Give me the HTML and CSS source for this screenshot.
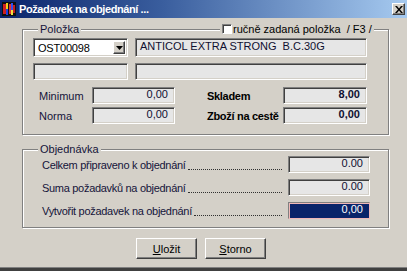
FILE: index.html
```html
<!DOCTYPE html>
<html lang="cs">
<head>
<meta charset="utf-8">
<title>Požadavek na objednání</title>
<link rel="stylesheet" href="styles.css">
</head>
<body>
<div class="window">
  <div class="titlebar">
    <svg class="app-icon" width="14" height="14" viewBox="0 0 14 14">
      <rect x="0" y="0" width="14" height="14" fill="#101010"/>
      <rect x="1" y="2" width="3" height="10" fill="#d02020"/>
      <rect x="4" y="1" width="2" height="6" fill="#f0d020"/>
      <rect x="4" y="7" width="2" height="6" fill="#2040e0"/>
      <rect x="7" y="2" width="2" height="10" fill="#e03030"/>
      <rect x="9" y="1" width="2" height="7" fill="#3050f0"/>
      <rect x="9" y="8" width="2" height="5" fill="#f0e040"/>
      <rect x="11" y="3" width="2" height="8" fill="#c02020"/>
    </svg>
    <span class="title">Požadavek na objednání ...</span>
    <span class="close">
      <svg width="8" height="7" viewBox="0 0 8 7"><path d="M0 0h2l2 2.5L6 0h2L5 3.5 8 7H6L4 4.5 2 7H0l3-3.5z" fill="#000"/></svg>
    </span>
  </div>
  <div class="content">
    <div class="group g1">
      <span class="legend legend-main">Položka</span>
      <span class="legend legend-check"><span class="check"></span>ručně zadaná položka&nbsp; / F3 /</span>
      <div class="ident">
        <div class="combo">
          <span class="combo-text">OST00098</span>
          <span class="combo-btn"><svg width="7" height="4" viewBox="0 0 7 4"><path d="M0 0h7L3.5 4z" fill="#000"/></svg></span>
        </div>
        <div class="field">ANTICOL EXTRA STRONG&nbsp; B.C.30G</div>
        <div class="field"></div>
        <div class="field"></div>
      </div>
      <div class="stats">
        <span class="lbl">Minimum</span>
        <div class="field num">0,00</div>
        <span class="lbl lbl-strong">Skladem</span>
        <div class="field num strong">8,00</div>
        <span class="lbl">Norma</span>
        <div class="field num">0,00</div>
        <span class="lbl lbl-strong">Zboží na cestě</span>
        <div class="field num strong">0,00</div>
      </div>
    </div>
    <div class="group g2">
      <span class="legend legend-main">Objednávka</span>
      <div class="orow">
        <span class="olbl">Celkem připraveno k objednání</span><span class="dots"></span>
        <div class="field num ofield">0.00</div>
      </div>
      <div class="orow">
        <span class="olbl">Suma požadavků na objednání</span><span class="dots"></span>
        <div class="field num ofield">0.00</div>
      </div>
      <div class="orow">
        <span class="olbl">Vytvořit požadavek na objednání</span><span class="dots"></span>
        <div class="field num ofield selected">0,00</div>
      </div>
    </div>
    <div class="buttons">
      <button class="btn" type="button"><u>U</u>ložit</button>
      <button class="btn" type="button"><u>S</u>torno</button>
    </div>
  </div>
  <div class="frame-bottom"></div>
</div>
</body>
</html>
```
FILE: styles.css
```css
html, body {
  margin: 0;
  padding: 0;
}
body {
  width: 407px;
  height: 271px;
  overflow: hidden;
  background: #d4d0c8;
  font-family: "Liberation Sans", Arial, sans-serif;
  font-size: 11px;
  color: #000;
}
.window {
  width: 407px;
  height: 271px;
  display: flex;
  flex-direction: column;
  background: #d4d0c8;
}
.titlebar {
  height: 18px;
  flex: none;
  display: flex;
  align-items: center;
  background: linear-gradient(to right, #0a246a 0%, #3a5e9e 40%, #a6caf0 100%);
  padding-left: 2px;
  box-sizing: border-box;
}
.app-icon {
  flex: none;
  display: block;
}
.title {
  margin-left: 3px;
  color: #fff;
  font-weight: bold;
  font-size: 11px;
  letter-spacing: -0.4px;
  white-space: nowrap;
}
.close {
  margin-left: auto;
  margin-right: 2px;
  width: 13px;
  height: 12px;
  box-sizing: border-box;
  background: #d4d0c8;
  border: 1px solid;
  border-color: #fff #404040 #404040 #fff;
  box-shadow: inset -1px -1px #808080;
  display: flex;
  align-items: center;
  justify-content: center;
}
.close svg { display: block; }
.content {
  padding: 11px 0 0 22px;
  display: flex;
  flex-direction: column;
}
.group {
  position: relative;
  width: 367px;
  box-sizing: border-box;
  border: 1px solid #808080;
  box-shadow: inset 1px 1px #fff, 1px 1px #fff;
}
.g1 {
  height: 106px;
  padding: 8px 0 0 10px;
}
.g2 {
  height: 79px;
  margin-top: 14px;
  padding: 6px 18px 0 19px;
  display: flex;
  flex-direction: column;
  gap: 6px;
}
.legend {
  position: absolute;
  top: -8px;
  background: #d4d0c8;
  padding: 0 2px;
  line-height: 14px;
  color: #14143a;
  white-space: nowrap;
}
.legend-main { left: 15px; }
.legend-check {
  left: 197px;
  display: flex;
  align-items: center;
  gap: 1px;
  color: #000;
}
.check {
  width: 10px;
  height: 10px;
  box-sizing: border-box;
  background: #fff;
  border: 1px solid;
  border-color: #808080 #fff #fff #808080;
  box-shadow: inset 1px 1px #404040;
}
.field {
  box-sizing: border-box;
  background: #e6e6e6;
  border: 1px solid;
  border-color: #808080 #fff #fff #808080;
  box-shadow: inset 1px 1px #404040, inset -1px -1px #d4d0c8;
  padding: 0 4px;
  line-height: 13px;
  white-space: nowrap;
  overflow: hidden;
  color: #101030;
}
.num {
  text-align: right;
  padding-right: 6px;
}
.strong { font-weight: bold; }
.ident {
  display: grid;
  grid-template-columns: 95px 232px;
  grid-template-rows: 19px 17px;
  column-gap: 7px;
  row-gap: 6px;
}
.ident .field {
  line-height: 15px;
  padding-left: 4px;
}
.combo {
  box-sizing: border-box;
  background: #fff;
  border: 1px solid;
  border-color: #808080 #fff #fff #808080;
  box-shadow: inset 1px 1px #404040, inset -1px -1px #d4d0c8;
  padding: 2px;
  display: flex;
  align-items: stretch;
}
.combo-text {
  flex: 1;
  padding-left: 2px;
  line-height: 15px;
  letter-spacing: -0.2px;
}
.combo-btn {
  width: 12px;
  box-sizing: border-box;
  background: #d4d0c8;
  border: 1px solid;
  border-color: #fff #404040 #404040 #fff;
  box-shadow: inset -1px -1px #808080;
  display: flex;
  align-items: center;
  justify-content: center;
}
.combo-btn svg { display: block; }
.stats {
  margin-top: 7px;
  display: grid;
  grid-template-columns: 59px 83px 108px 84px;
  grid-template-rows: 17px 17px;
  row-gap: 3px;
  align-items: center;
}
.stats .field { height: 17px; }
.lbl {
  padding-left: 6px;
  color: #14143a;
  white-space: nowrap;
}
.lbl-strong {
  padding-left: 32px;
  font-weight: bold;
  letter-spacing: -0.3px;
  color: #000;
}
.orow {
  height: 17px;
  display: flex;
  align-items: center;
}
.olbl {
  color: #14143a;
  letter-spacing: -0.3px;
  white-space: nowrap;
}
.dots {
  flex: 1;
  height: 9px;
  margin: 0 6px 0 2px;
  border-bottom: 1px dotted #303030;
  align-self: center;
}
.ofield {
  width: 82px;
  height: 17px;
  flex: none;
}
.selected {
  background: #0a246a;
  color: #fff;
  border-color: #808080 #f0b8b8 #f0b8b8 #808080;
  box-shadow: inset 1px 1px #f0b8b8;
}
.buttons {
  margin-top: 10px;
  padding-left: 114px;
  display: flex;
  gap: 8px;
}
.btn {
  width: 61px;
  height: 21px;
  box-sizing: border-box;
  background: #d4d0c8;
  border: 1px solid;
  border-color: #fff #404040 #404040 #fff;
  box-shadow: inset -1px -1px #808080;
  font-family: "Liberation Sans", Arial, sans-serif;
  font-size: 11px;
  color: #000;
  padding: 0;
  margin: 0;
}
.frame-bottom {
  margin-top: auto;
  height: 4px;
  box-sizing: border-box;
  border-top: 1px solid #808080;
  background: #404040;
}
```
